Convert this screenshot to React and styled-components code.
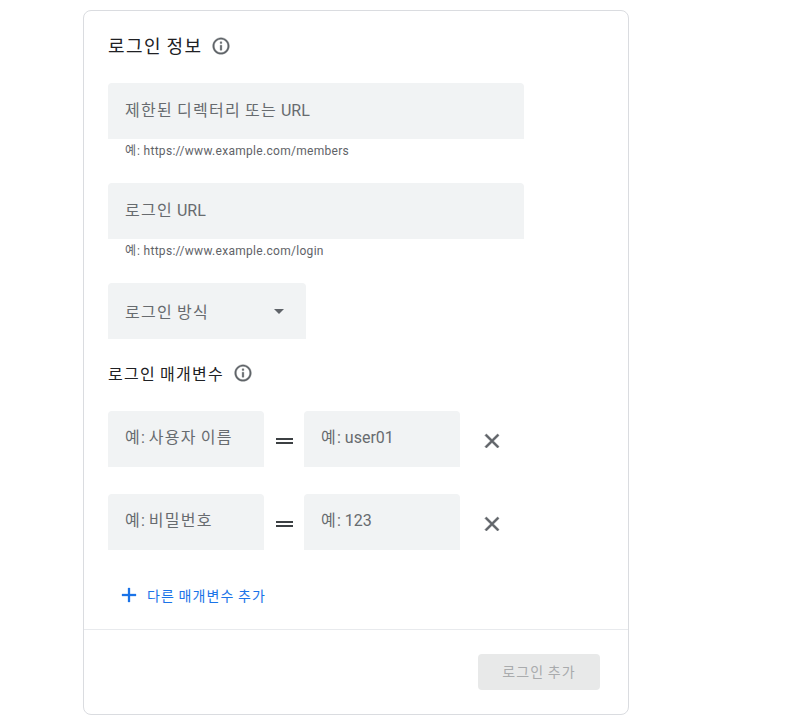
import styled, { createGlobalStyle } from "styled-components";

const GlobalStyle = createGlobalStyle`
  html, body {
    margin: 0;
    padding: 0;
    background: #fff;
    font-family: Roboto, "Noto Sans CJK KR", sans-serif;
  }
`;

const Page = styled.div`
  width: 794px;
  height: 717px;
  overflow: hidden;
  padding: 10px 0 0 83px;
  box-sizing: border-box;
`;

const Card = styled.section`
  width: 546px;
  height: 705px;
  box-sizing: border-box;
  border: 1px solid #dadce0;
  border-radius: 8px;
  display: flex;
  flex-direction: column;
`;

const Body = styled.div`
  padding: 23px 24px 0;
  height: 619px;
  box-sizing: border-box;
  border-bottom: 1px solid #e8eaed;
  flex-shrink: 0;
`;

const Heading = styled.div`
  display: flex;
  align-items: center;
  gap: 9px;
  height: 24px;
  font-size: ${(props) => (props.$small ? "16px" : "18px")};
  color: #202124;
  white-space: nowrap;
`;

const HeadingText = styled.span`
  padding-bottom: ${(props) => (props.$lift ? "2px" : "0")};
`;

// the hangul in the shot sits on a full em, Noto's is narrower
const Hangul = styled.span`
  letter-spacing: 0.08em;
`;

const Ko = ({ children }) =>
  children
    .split(/([\uac00-\ud7a3]+)/)
    .map((part, i) => (i % 2 ? <Hangul key={i}>{part}</Hangul> : part));

const InfoIcon = () => (
  <svg width="20" height="20" viewBox="0 0 24 24" fill="#5f6368" stroke="#5f6368" strokeWidth="0.4">
    <path d="M11 7h2v2h-2zm0 4h2v6h-2zm1-9C6.48 2 2 6.48 2 12s4.48 10 10 10 10-4.48 10-10S17.52 2 12 2zm0 18c-4.41 0-8-3.59-8-8s3.59-8 8-8 8 3.59 8 8-3.59 8-8 8z" />
  </svg>
);

const Field = styled.div`
  width: ${(props) => props.$width}px;
  height: 56px;
  box-sizing: border-box;
  background: #f1f3f4;
  border-radius: 4px 4px 0 0;
  padding: 0 16px ${(props) => props.$lift * 2}px 17px;
  display: flex;
  align-items: center;
  justify-content: space-between;
  font-size: 16px;
  color: #676b6f;
  white-space: nowrap;
  flex-shrink: 0;
`;

const Caret = styled.span`
  width: 0;
  height: 0;
  margin-right: 6px;
  border-left: 5px solid transparent;
  border-right: 5px solid transparent;
  border-top: 5px solid #5f6368;
`;

const Hint = styled.div`
  height: 16px;
  margin-top: 4px;
  padding-left: 17px;
  font-size: 12px;
  line-height: 16px;
  letter-spacing: 0.3px;
  color: #5f6368;
`;

const FieldGroup = styled.div`
  margin-top: ${(props) => props.$top}px;
`;

const ParamRow = styled.div`
  display: flex;
  align-items: center;
  margin-top: ${(props) => props.$top}px;
`;

const Equals = styled.span`
  width: 40px;
  display: flex;
  justify-content: center;
  padding-top: 4px;
`;

const EqualsBar = styled.span`
  display: block;
  width: 17px;
  height: 6px;
  box-sizing: border-box;
  border-top: 2px solid #3c4043;
  border-bottom: 2px solid #3c4043;
`;

const RemoveButton = styled.button`
  width: 24px;
  height: 24px;
  margin: 3px 0 0 20px;
  padding: 0;
  border: 0;
  background: none;
  display: flex;
  align-items: center;
  justify-content: center;
`;

const AddLink = styled.a`
  display: flex;
  align-items: center;
  gap: 6px;
  margin: 33px 0 0 9px;
  height: 24px;
  font-size: 14px;
  color: #1a73e8;
`;

const Footer = styled.div`
  display: flex;
  justify-content: flex-end;
  padding: 24px 28px 0 0;
`;

const SubmitButton = styled.button`
  width: 122px;
  height: 36px;
  padding: 0 0 2px;
  border: 0;
  border-radius: 4px;
  background: #e8e9e9;
  color: #a9abad;
  font-family: inherit;
  font-size: 14px;
`;

const Param = ({ name, value, top }) => (
  <ParamRow $top={top}>
    <Field $width={156} $lift={3}>
      <span><Ko>{name}</Ko></span>
    </Field>
    <Equals>
      <EqualsBar />
    </Equals>
    <Field $width={156} $lift={3}>
      <span><Ko>{value}</Ko></span>
    </Field>
    <RemoveButton aria-label="삭제">
      <svg width="24" height="24" viewBox="0 0 24 24" fill="#5f6368" stroke="#5f6368" strokeWidth="0.6">
        <path d="M19 6.41 17.59 5 12 10.59 6.41 5 5 6.41 10.59 12 5 17.59 6.41 19 12 13.41 17.59 19 19 17.59 13.41 12z" />
      </svg>
    </RemoveButton>
  </ParamRow>
);

const App = () => {
  return (
    <Page>
      <GlobalStyle />
      <Card>
        <Body>
          <Heading>
            <HeadingText $lift><Ko>로그인 정보</Ko></HeadingText>
            <InfoIcon />
          </Heading>
          <FieldGroup $top={25}>
            <Field $width={416} $lift={2}>
              <span><Ko>제한된 디렉터리 또는 URL</Ko></span>
            </Field>
            <Hint><Ko>예: https://www.example.com/members</Ko></Hint>
          </FieldGroup>
          <FieldGroup $top={24}>
            <Field $width={416} $lift={2}>
              <span><Ko>로그인 URL</Ko></span>
            </Field>
            <Hint><Ko>예: https://www.example.com/login</Ko></Hint>
          </FieldGroup>
          <FieldGroup $top={24}>
            <Field $width={198} $lift={0}>
              <span><Ko>로그인 방식</Ko></span>
              <Caret />
            </Field>
          </FieldGroup>
          <FieldGroup $top={22}>
            <Heading $small>
              <HeadingText><Ko>로그인 매개변수</Ko></HeadingText>
              <InfoIcon />
            </Heading>
          </FieldGroup>
          <Param top={26} name="예: 사용자 이름" value="예: user01" />
          <Param top={27} name="예: 비밀번호" value="예: 123" />
          <AddLink>
            <svg width="24" height="24" viewBox="0 0 24 24" fill="#1a73e8" stroke="#1a73e8" strokeWidth="0.3">
              <path d="M19 13h-6v6h-2v-6H5v-2h6V5h2v6h6z" />
            </svg>
            <span><Ko>다른 매개변수 추가</Ko></span>
          </AddLink>
        </Body>
        <Footer>
          <SubmitButton disabled><Ko>로그인 추가</Ko></SubmitButton>
        </Footer>
      </Card>
    </Page>
  );
};

export default App;
